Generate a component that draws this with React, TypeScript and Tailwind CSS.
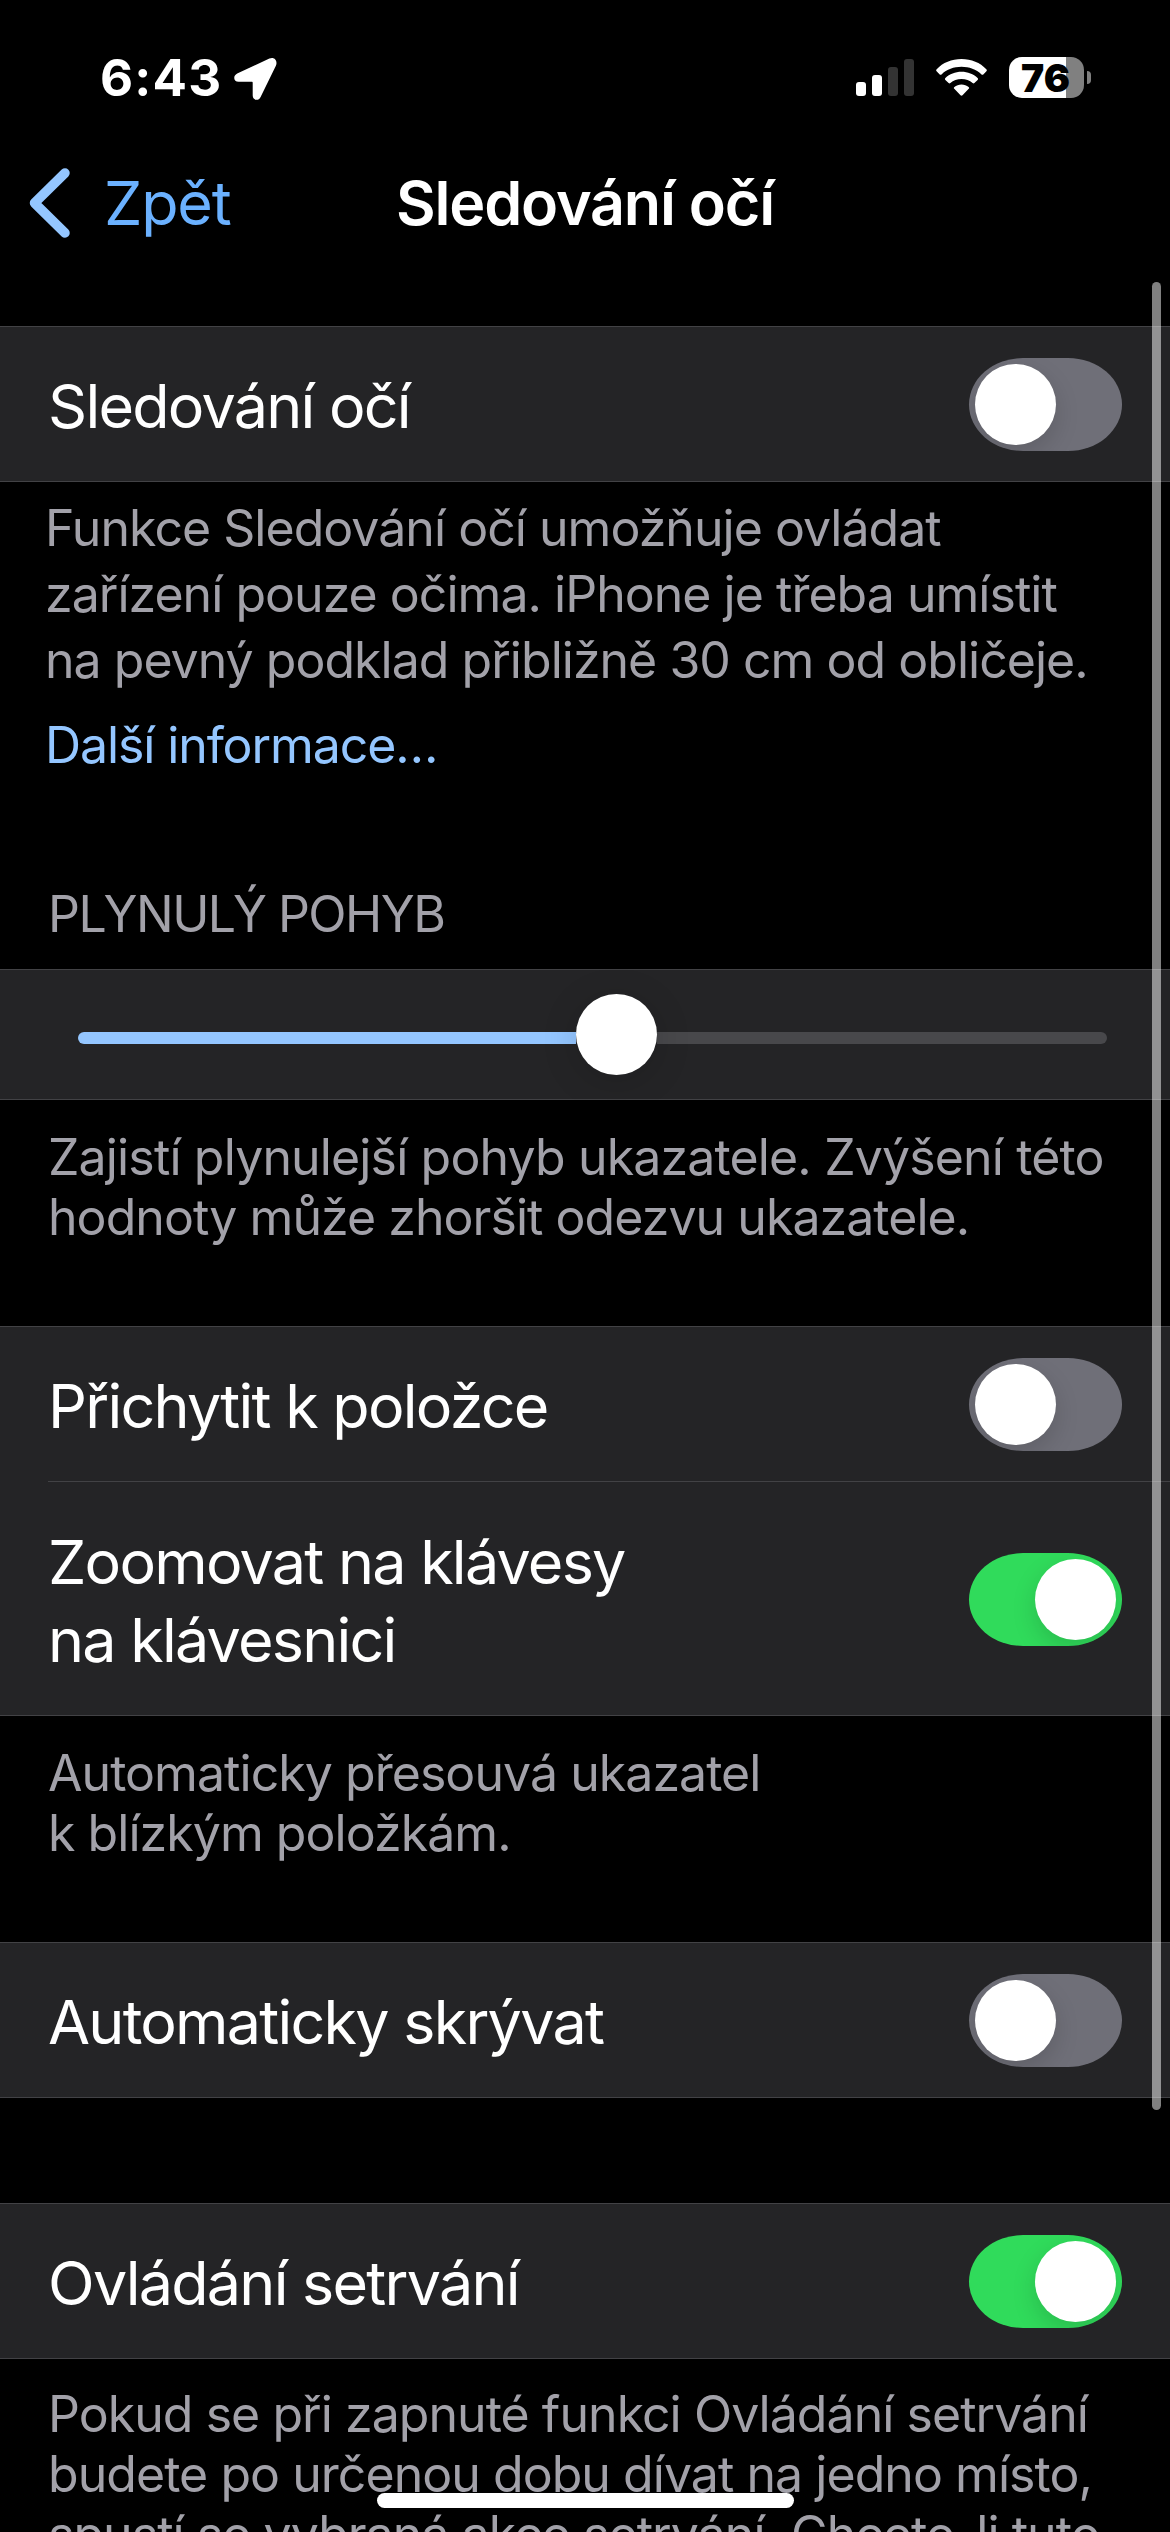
import type { ReactNode } from "react";
import clsx from "clsx";

function StatusBar() {
  return (
    <div className="flex h-[156px] items-start justify-between pl-[100px] pr-[79px] pt-[57px]">
      <div className="flex items-start gap-[12px]">
        <span className="text-[51px] font-bold leading-[42px] tracking-[1.2px]">6:43</span>
        <svg className="mt-px h-[42px] w-[43px]" viewBox="0 0 43 42" fill="#fff">
          <path d="M35.4.6 3.2 15.6C-1.4 18-.4 23.7 4.6 23.7H17.6C18.4 23.7 18.7 24 18.7 24.8V37.6C18.7 42.6 24.8 43.4 26.6 39L42 7.6C43.8 2.8 40.4-1.6 35.4.6Z" />
        </svg>
      </div>

      <div className="flex items-start">
        {/* Cellular signal */}
        <div className="mt-[2px] flex h-[37px] items-end gap-[6px]">
          <span className="h-[14px] w-[10px] rounded-[3px] bg-white" />
          <span className="h-[21px] w-[10px] rounded-[3px] bg-white" />
          <span className="h-[29px] w-[10px] rounded-[3px] bg-[#333333]" />
          <span className="h-[37px] w-[10px] rounded-[3px] bg-[#333333]" />
        </div>

        {/* Wi-Fi */}
        <svg className="ml-[22px] mt-[2px] h-[37px] w-[51px]" viewBox="0 0 51 37" fill="#fff">
          <path d="M25.5 0C35.3 0 44.2 3.7 50.3 10.2 51 10.9 51 11.6 50.4 12.2L47.3 15.4C46.8 15.9 46.1 15.9 45.5 15.4 40.2 10.5 33.2 7.8 25.5 7.8S10.8 10.5 5.5 15.4C4.9 15.9 4.2 15.9 3.7 15.4L.6 12.2C0 11.6 0 10.9.7 10.2 6.8 3.7 15.7 0 25.5 0Z" />
          <path d="M25.5 12.8C31.8 12.8 37.4 15.1 41.6 19 42.2 19.6 42.2 20.3 41.6 20.9L38.4 24.1C37.9 24.6 37.2 24.6 36.6 24.1 33.7 21.6 29.8 20.1 25.5 20.1S17.3 21.6 14.4 24.1C13.8 24.6 13.1 24.6 12.6 24.1L9.4 20.9C8.8 20.3 8.8 19.6 9.4 19 13.6 15.1 19.2 12.8 25.5 12.8Z" />
          <path d="M25.5 25.5C28.2 25.5 30.7 26.4 32.6 27.9 33.3 28.5 33.3 29.2 32.7 29.8L26.5 36.3C25.9 36.9 25.1 36.9 24.5 36.3L18.3 29.8C17.7 29.2 17.7 28.5 18.4 27.9 20.3 26.4 22.8 25.5 25.5 25.5Z" />
        </svg>

        {/* Battery */}
        <div className="ml-[22px] flex items-center gap-[3px]">
          <div className="flex h-[41px] w-[75px] items-center justify-center rounded-[13px] bg-[linear-gradient(to_right,#fff_57px,#808080_57px)]">
            <span className="pr-[2px] text-[39px] font-black leading-none text-black">76</span>
          </div>
          <span className="h-[13px] w-[4px] rounded-r-full bg-[#808080]" />
        </div>
      </div>
    </div>
  );
}

function NavBar() {
  return (
    <header className="grid h-[170px] grid-cols-[1fr_auto_1fr] items-start">
      <button className="flex items-start gap-[34px] pl-[29px] pt-[12px] text-left">
        <svg className="h-[70px] w-[41px]" viewBox="0 0 41 70" fill="none">
          <path
            d="M36 5 5.5 35 36 65"
            stroke="#94c6ff"
            strokeWidth="9.5"
            strokeLinecap="round"
            strokeLinejoin="round"
          />
        </svg>
        <span className="text-[61px] leading-[70px] tracking-[-1.2px] text-[#6bb1ff]">Zpět</span>
      </button>
      <h1 className="pt-[12px] text-[61px] font-semibold leading-[70px] tracking-[-1.2px]">
        Sledování očí
      </h1>
    </header>
  );
}

function Toggle({ on = false }: { on?: boolean }) {
  return (
    <button
      role="switch"
      aria-checked={on}
      className={clsx(
        "flex h-[93px] w-[153px] shrink-0 items-center overflow-hidden rounded-[54px/46.5px] px-[6px]",
        on ? "justify-end bg-[#30db5b]" : "justify-start bg-[#6f6f78]"
      )}
    >
      <span className="size-[81px] rounded-full bg-white shadow-[0_9px_24px_rgba(0,0,0,0.15)]" />
    </button>
  );
}

function Group({ children }: { children: ReactNode }) {
  return <div className="border-y border-[#424245] bg-[#242426]">{children}</div>;
}

function Row({ on, tall, children }: { on?: boolean; tall?: boolean; children: ReactNode }) {
  return (
    <div className={clsx("flex items-center justify-between px-12", tall ? "h-[233px] pt-px" : "h-[154px]")}>
      <span className="pt-1 text-[61px] leading-[78px] tracking-[-1.75px]">{children}</span>
      <Toggle on={on} />
    </div>
  );
}

function Note({ className, children }: { className?: string; children: ReactNode }) {
  return (
    <p
      className={clsx(
        "whitespace-nowrap pl-12 text-[50px] leading-[60px] tracking-[-0.95px] text-[#a2a1a9]",
        className
      )}
    >
      {children}
    </p>
  );
}

export default function App() {
  return (
    <div className="relative h-[2532px] w-[1170px] overflow-hidden bg-black font-['Inter',sans-serif] text-white">
      <StatusBar />
      <NavBar />

      <Group>
        <Row>Sledování očí</Row>
      </Group>
      <div className="whitespace-nowrap pl-[45px] pt-[13px] text-[50px] leading-[66px]">
        <p className="tracking-[-0.97px] text-[#a2a1a9]">
          Funkce Sledování očí umožňuje ovládat
          <br />
          zařízení pouze očima. iPhone je třeba umístit
          <br />
          na pevný podklad přibližně 30 cm od obličeje.
        </p>
        <a className="mt-[19px] block tracking-[-1.1px] text-[#94c6ff]">Další informace…</a>
      </div>

      <h2 className="pb-[25px] pl-12 pt-[106px] text-[50px] leading-[60px] tracking-[-1.5px] text-[#a2a1a9]">
        PLYNULÝ POHYB
      </h2>
      <Group>
        <div className="flex h-[129px] items-center pl-[78px] pr-[63px]">
          <div className="mt-[7px] h-3 w-[498px] rounded-l-full bg-[#94c6ff]" />
          <div className="z-10 size-[81px] shrink-0 rounded-full bg-white shadow-[0_6px_36px_rgba(0,0,0,0.15)]" />
          <div className="mt-[7px] h-3 grow rounded-r-full bg-[#48484b]" />
        </div>
      </Group>
      <Note className="pt-[27px]">
        <span className="tracking-[-0.85px]">Zajistí plynulejší pohyb ukazatele. Zvýšení této</span>
        <br />
        hodnoty může zhoršit odezvu ukazatele.
      </Note>

      <div className="mt-[79px]">
        <Group>
          <Row>Přichytit k položce</Row>
          <div className="ml-12 h-px bg-[#424245]" />
          <Row on tall>
            Zoomovat na klávesy
            <br />
            na klávesnici
          </Row>
        </Group>
        <Note className="pt-[27px]">
          Automaticky přesouvá ukazatel
          <br />
          k blízkým položkám.
        </Note>
      </div>

      <div className="mt-[79px]">
        <Group>
          <Row>Automaticky skrývat</Row>
        </Group>
      </div>

      <div className="mt-[105px]">
        <Group>
          <Row on>Ovládání setrvání</Row>
        </Group>
        <Note className="pt-[25px]">
          Pokud se při zapnuté funkci Ovládání setrvání
          <br />
          budete po určenou dobu dívat na jedno místo,
          <br />
          spustí se vybraná akce setrvání. Chcete-li tuto
        </Note>
      </div>

      {/* Scroll indicator */}
      <div className="absolute right-[9px] top-[282px] z-20 h-[1828px] w-[9px] rounded-full bg-white/50" />
      {/* Home indicator */}
      <div className="absolute bottom-[24px] left-[377px] z-20 h-[15px] w-[417px] rounded-full bg-white" />
    </div>
  );
}
